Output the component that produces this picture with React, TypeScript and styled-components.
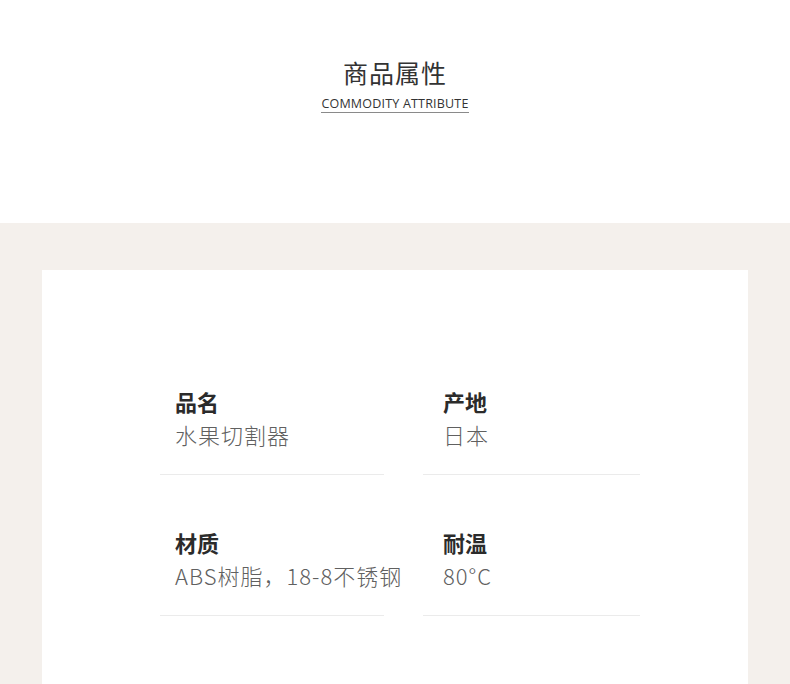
import styled, { createGlobalStyle } from "styled-components";

const GlobalStyle = createGlobalStyle`
  body {
    margin: 0;
    background: #ffffff;
    font-family: "Noto Sans CJK SC", "Noto Sans", sans-serif;
  }
`;

const Page = styled.div`
  width: 790px;
  height: 684px;
  overflow: hidden;
  display: flex;
  flex-direction: column;
`;

const Header = styled.header`
  height: 223px;
  display: flex;
  flex-direction: column;
  align-items: center;
  padding-top: 55px;
  box-sizing: border-box;
`;

const Title = styled.h1`
  margin: 0;
  font-size: 25px;
  line-height: 34px;
  font-weight: 400;
  color: #333333;
  letter-spacing: 1px;
`;

const Subtitle = styled.div`
  margin-top: 7px;
  font-family: "Open Sans", "Noto Sans", sans-serif;
  font-size: 12.5px;
  line-height: 16px;
  color: #333333;
  border-bottom: 1px solid #8a8a8a;
  letter-spacing: 0.2px;
`;

const Band = styled.section`
  flex: 1;
  background: #f4f0ec;
  padding: 47px 42px 0;
  display: flex;
`;

const Card = styled.div`
  flex: 1;
  background: #ffffff;
  padding: 116px 0 0 118px;
  box-sizing: border-box;
`;

const Grid = styled.div`
  display: grid;
  grid-template-columns: 224px 217px;
  column-gap: 39px;
  row-gap: 52px;
`;

const Cell = styled.div<{ $indent: number }>`
  padding-left: ${(p) => p.$indent}px;
  padding-bottom: 25px;
  border-bottom: 1px solid #ebebeb;
`;

const Label = styled.div`
  font-size: 22px;
  line-height: 30px;
  font-weight: 700;
  color: #2b2b2b;
`;

const Value = styled.div`
  margin-top: 3px;
  font-size: 22px;
  line-height: 30px;
  font-weight: 300;
  color: #606060;
  letter-spacing: 1px;
  white-space: nowrap;
`;

const attrs = [
  { label: "品名", value: "水果切割器", indent: 15 },
  { label: "产地", value: "日本", indent: 20 },
  { label: "材质", value: "ABS树脂，18-8不锈钢", indent: 15 },
  { label: "耐温", value: "80°C", indent: 20 },
];

export default function App() {
  return (
    <Page>
      <GlobalStyle />
      <Header>
        <Title>商品属性</Title>
        <Subtitle>COMMODITY ATTRIBUTE</Subtitle>
      </Header>
      <Band>
        <Card>
          <Grid>
            {attrs.map((a) => (
              <Cell key={a.label} $indent={a.indent}>
                <Label>{a.label}</Label>
                <Value>{a.value}</Value>
              </Cell>
            ))}
          </Grid>
        </Card>
      </Band>
    </Page>
  );
}
